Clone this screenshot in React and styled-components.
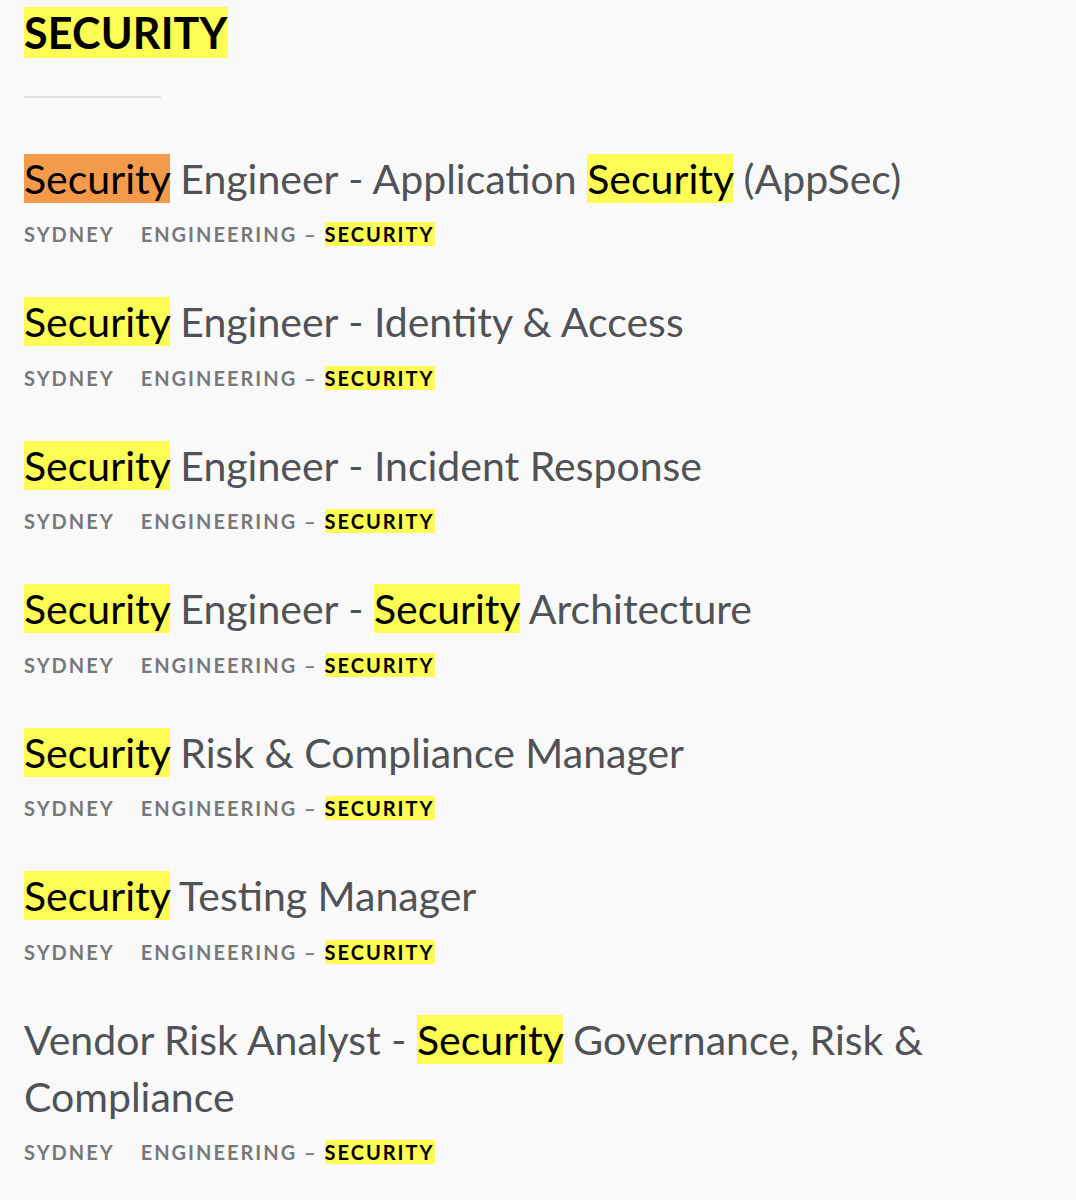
import React from "react";
import styled, { createGlobalStyle } from "styled-components";

const Global = createGlobalStyle`
  html, body { margin: 0; padding: 0; background: #f9f9f9; }
  body { font-family: Lato, "Open Sans", sans-serif; -webkit-font-smoothing: antialiased; }
`;

const Page = styled.div`
  padding: 9px 24px 40px;
`;

const Heading = styled.h2`
  margin: 0;
  font-size: 43px;
  line-height: 48px;
  font-weight: 700;
  color: #000;
  letter-spacing: 0.2px;
`;

const Divider = styled.hr`
  width: 137px;
  height: 2px;
  margin: 39px 0 0;
  border: 0;
  background: #e2e2e2;
`;

const List = styled.ul`
  list-style: none;
  margin: 51.5px 0 0;
  padding: 0;
  display: flex;
  flex-direction: column;
  gap: 47px;
`;

const Item = styled.li`
  display: flex;
  flex-direction: column;
  gap: 15.5px;
`;

const Title = styled.a`
  font-size: 41px;
  line-height: 57px;
  font-weight: 400;
  color: #505256;
  text-decoration: none;
  max-width: 960px;
`;

const Mark = styled.mark`
  background: ${(p) => (p.$current ? "#f49b4b" : "#fdfd55")};
  color: #000;
  padding: 0;
`;

const Meta = styled.div`
  display: flex;
  gap: 26px;
  font-size: 20px;
  line-height: 24px;
  font-weight: 700;
  letter-spacing: 2px;
  color: #777879;
  text-transform: uppercase;
`;

const jobs = [
  ["Security", " Engineer - Application ", "Security", " (AppSec)"],
  ["Security", " Engineer - Identity & Access"],
  ["Security", " Engineer - Incident Response"],
  ["Security", " Engineer - ", "Security", " Architecture"],
  ["Security", " Risk & Compliance Manager"],
  ["Security", " Testing Manager"],
  ["Vendor Risk Analyst - ", "Security", " Governance, Risk & Compliance"],
];

export default function App() {
  return (
    <>
      <Global />
      <Page>
        <Heading>
          <Mark>SECURITY</Mark>
        </Heading>
        <Divider />
        <List>
          {jobs.map((parts, i) => (
            <Item key={i}>
              <Title href="#">
                {parts.map((p, j) =>
                  p === "Security" ? (
                    <Mark key={j} $current={i === 0 && j === 0}>
                      {p}
                    </Mark>
                  ) : (
                    <React.Fragment key={j}>{p}</React.Fragment>
                  )
                )}
              </Title>
              <Meta>
                <span>Sydney</span>
                <span>
                  Engineering – <Mark>Security</Mark>
                </span>
              </Meta>
            </Item>
          ))}
        </List>
      </Page>
    </>
  );
}
